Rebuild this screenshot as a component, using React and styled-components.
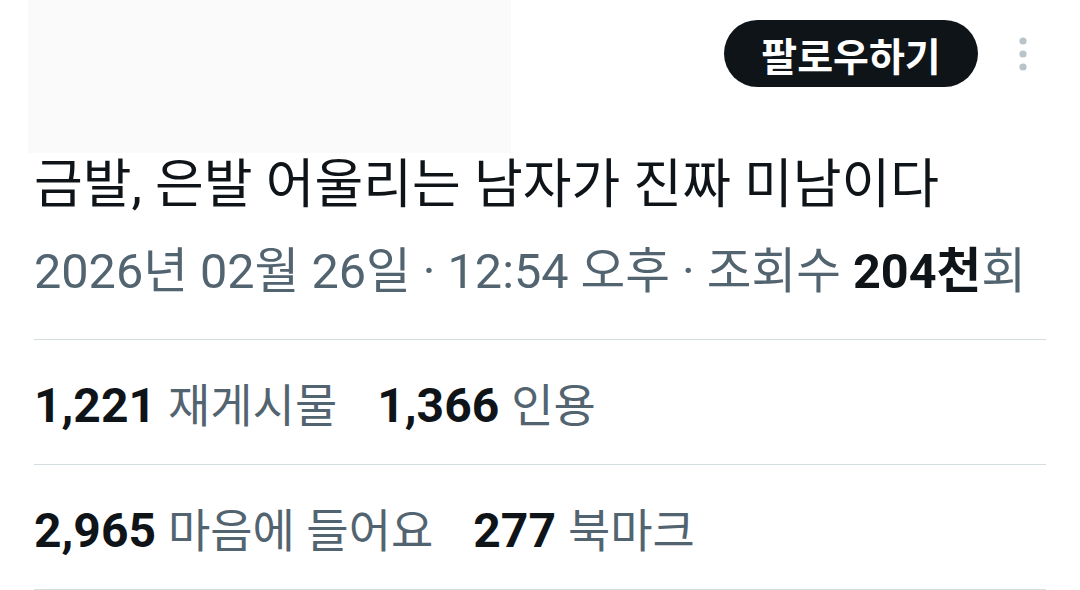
import React from 'react';
import styled, { createGlobalStyle } from 'styled-components';

const GlobalStyle = createGlobalStyle`
    body {
        margin:0;
        background:#ffffff;
        font-family: Roboto, "Noto Sans CJK KR", sans-serif;
        color:#0f1419;
    }
`;

const Container = styled.div`
    padding:0px 34px;
    width:1080px;
    box-sizing:border-box;
`;
const Header = styled.div`
    display:flex;
    justify-content:space-between;
    align-items:flex-start;
    height:153px;
`;
const MediaBox = styled.div`
    width:483px;
    height:153px;
    margin-left:-6px;
    background:#fafafa;
`;
const Actions = styled.div`
    display:flex;
    align-items:center;
    padding-top:20px;
`;
const FollowButton = styled.div`
    width:254px;
    height:67px;
    border-radius:34px;
    background:#0f1419;
    color:#ffffff;
    display:flex;
    justify-content:center;
    align-items:center;
    font-size:39px;
    font-weight:700;
`;
const More = styled.div`
    width:46px;
    margin-left:22px;
    display:flex;
    justify-content:center;
`;
const Title = styled.div`
    font-size:53px;
    line-height:64px;
    font-weight:400;
    white-space:nowrap;
`;
const Meta = styled.div`
    margin-top:23px;
    margin-bottom:35px;
    font-size:48.6px;
    line-height:64px;
    color:#536471;
    white-space:nowrap;
`;
const Strong = styled.span`
    color:#0f1419;
    font-weight:700;
`;
const StatRow = styled.div`
    border-top:1px solid #d6dde1;
    height:124px;
    display:flex;
    align-items:center;
    gap:40px;
    font-size:48px;
    &:last-child{
        border-bottom:1px solid #d6dde1;
    }
`;
const Stat = styled.div`
    display:flex;
    align-items:baseline;
    gap:12px;
    color:#536471;
`;
const Num = styled.span`
    font-weight:700;
    color:#0f1419;
`;
const Label = styled.span`
    font-size:46px;
`;

const stats = [
    [['1,221', '재게시물'], ['1,366', '인용']],
    [['2,965', '마음에 들어요'], ['277', '북마크']],
];

const App = () => {
  return (
    <>
    <GlobalStyle/>
    <Container>
        <Header>
            <MediaBox/>
            <Actions>
                <FollowButton>팔로우하기</FollowButton>
                <More>
                    <svg width="10" height="36" viewBox="0 0 10 36">
                        <circle cx="5" cy="5" r="3.6" fill="#b8c3ca"/>
                        <circle cx="5" cy="18" r="3.6" fill="#b8c3ca"/>
                        <circle cx="5" cy="31" r="3.6" fill="#b8c3ca"/>
                    </svg>
                </More>
            </Actions>
        </Header>
        <Title>금발, 은발 어울리는 남자가 진짜 미남이다</Title>
        <Meta>2026년 02월 26일 · 12:54 오후 · 조회수 <Strong>204천</Strong>회</Meta>
        {stats.map((row, i) => (
            <StatRow key={i}>
                {row.map(([n, label]) => (
                    <Stat key={label}>
                        <Num>{n}</Num>
                        <Label>{label}</Label>
                    </Stat>
                ))}
            </StatRow>
        ))}
    </Container>
    </>
  )
}

export default App;
